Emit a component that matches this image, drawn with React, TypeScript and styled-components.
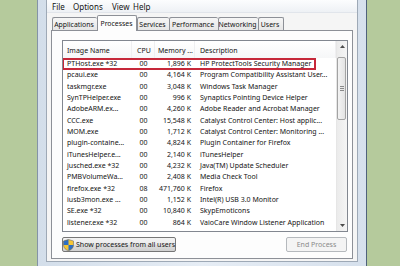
import React from 'react';
import styled, { createGlobalStyle } from 'styled-components';

const GlobalStyle = createGlobalStyle`
  html, body {
    margin: 0;
    padding: 0;
  }
  body {
    width: 400px;
    height: 266px;
    overflow: hidden;
    background: #b5ca9c;
    font-family: "Noto Sans", "Open Sans", sans-serif;
    color: #141414;
  }
`;

const Stage = styled.div`
  display: flex;
  width: 400px;
  height: 266px;
  padding-left: 37px;
  box-sizing: border-box;
  background: #b5ca9c;
`;

const Window = styled.div`
  display: flex;
  flex-direction: column;
  width: 330px;
  height: 266px;
  box-sizing: border-box;
  padding: 0 8px 4px 8px;
  background: linear-gradient(to right, #d3deea, #e6edf5 50%, #d6e0ec);
  border-left: 1px solid #8493a6;
  border-right: 1px solid #4f627a;
`;

const Client = styled.div`
  flex: 1;
  display: flex;
  flex-direction: column;
  background: #f5f5f5;
  border: 1px solid #9ea9b6;
  border-top: none;
  overflow: hidden;
`;

const MenuBar = styled.div`
  display: flex;
  align-items: center;
  height: 13px;
  padding-left: 5px;
  background: linear-gradient(#fcfdfe, #eef1f5);
  border-bottom: 1px solid #e1e5eb;
  font-size: 8px;
  box-sizing: border-box;
`;

const MenuItem = styled.span<{ $w: number }>`
  flex: 0 0 ${p => p.$w}px;
  white-space: nowrap;
`;

const TabStrip = styled.div`
  display: flex;
  align-items: flex-end;
  height: 17px;
  padding-left: 4.5px;
  position: relative;
  z-index: 1;
`;

const Tab = styled.div<{ $w: number; $active?: boolean }>`
  display: flex;
  align-items: center;
  justify-content: center;
  flex: 0 0 ${p => p.$w}px;
  height: ${p => (p.$active ? 16 : 13)}px;
  margin-bottom: ${p => (p.$active ? -1 : 0)}px;
  box-sizing: border-box;
  border: 1px solid #8d9097;
  border-bottom: none;
  border-left-width: ${p => (p.$active ? 1 : 0)}px;
  border-right-width: ${p => (p.$active ? 1 : 0)}px;
  border-radius: 2px 2px 0 0;
  background: ${p =>
    p.$active ? '#fdfdfd' : 'linear-gradient(#f6f6f6, #e6e6e6)'};
  font-size: 6.9px;
  white-space: nowrap;
  box-shadow: ${p => (p.$active ? 'none' : 'inset 1px 0 0 #8d9097')};

  &:last-child {
    border-right-width: 1px;
  }
`;

const TabPanel = styled.div`
  flex: 1;
  display: flex;
  flex-direction: column;
  margin: 0 4px 2px 4px;
  padding: 9px 4px 0 10px;
  border: 1px solid #8d9097;
  background: #fdfdfd;
`;

const ListBox = styled.div`
  display: flex;
  height: 192px;
  box-sizing: border-box;
  border: 1px solid #828790;
  background: #fff;
  overflow: hidden;
`;

const ListMain = styled.div`
  flex: 1;
  display: flex;
  flex-direction: column;
  min-width: 0;
`;

const columns = '69px 23px 40px 1fr';

const HeaderRow = styled.div`
  display: grid;
  grid-template-columns: ${columns};
  height: 17px;
  flex-shrink: 0;
  align-items: center;
  background: linear-gradient(#ffffff, #f6f7f8);
  font-size: 7px;
`;

const HeadCell = styled.div<{ $pad: number }>`
  padding-left: ${p => p.$pad}px;
  height: 100%;
  display: flex;
  align-items: center;
  padding-top: 1px;
  box-sizing: border-box;
  border-right: 1px solid #efeff1;
  white-space: nowrap;
  overflow: hidden;
`;

const Row = styled.div`
  position: relative;
  display: grid;
  grid-template-columns: ${columns};
  height: 11.33px;
  flex-shrink: 0;
  align-items: center;
  font-size: 7px;
  line-height: 11px;
`;

const Cell = styled.div<{ $align?: 'left' | 'center' | 'right' }>`
  text-align: ${p => p.$align || 'left'};
  padding: ${p =>
    p.$align === 'right' ? '0 4px 0 0' : p.$align === 'center' ? '0' : '0 0 0 4px'};
  white-space: nowrap;
  overflow: hidden;
`;

const DescCell = styled(Cell)`
  padding-left: 5px;
`;

const Highlight = styled.div`
  position: absolute;
  left: -1px;
  top: -0.5px;
  width: 254px;
  height: 12px;
  box-sizing: border-box;
  border: 2px solid #c6283a;
`;

const ScrollBar = styled.div`
  display: flex;
  flex-direction: column;
  width: 10px;
  flex-shrink: 0;
  background: linear-gradient(to right, #ebebeb, #f5f5f5);
  border-left: 1px solid #e6e6e6;
`;

const ArrowButton = styled.div`
  display: flex;
  align-items: center;
  justify-content: center;
  height: 11px;
  flex-shrink: 0;
`;

const Track = styled.div`
  flex: 1;
  padding-top: 5px;
`;

const Thumb = styled.div`
  display: flex;
  flex-direction: column;
  align-items: center;
  justify-content: center;
  gap: 1px;
  height: 63px;
  margin: 0 1px 0 0;
  box-sizing: border-box;
  border: 1px solid #a3a3a3;
  border-radius: 2px;
  background: linear-gradient(to right, #f4f4f4, #e3e3e3);
`;

const Grip = styled.span`
  width: 4px;
  height: 1px;
  background: #8a8a8a;
`;

const ButtonRow = styled.div`
  display: flex;
  justify-content: space-between;
  margin-top: 5px;
  padding-right: 1px;
`;

const Button = styled.div<{ $w: number; $disabled?: boolean }>`
  display: flex;
  align-items: center;
  justify-content: center;
  gap: 2px;
  width: ${p => p.$w}px;
  height: 15px;
  box-sizing: border-box;
  border: 1px solid ${p => (p.$disabled ? '#b5b9bd' : '#767676')};
  border-radius: 2px;
  background: ${p =>
    p.$disabled
      ? '#f4f4f4'
      : 'linear-gradient(#f3f3f3 0%, #ebebeb 48%, #dddddd 52%, #d0d0d0 100%)'};
  color: ${p => (p.$disabled ? '#8a8a8a' : '#141414')};
  font-size: 7px;
  white-space: nowrap;
`;

const Shield = () => (
  <svg width="11" height="12" viewBox="0 0 11 12">
    <path d="M5.5 0.5 L10.5 2 L10.5 6 C10.5 9 8 11 5.5 11.7 C3 11 0.5 9 0.5 6 L0.5 2 Z" fill="#f6c634" />
    <path d="M5.5 0.5 L0.5 2 L0.5 6 L5.5 6 Z" fill="#2c6fc4" />
    <path d="M5.5 6 L10.5 6 C10.5 9 8 11 5.5 11.7 Z" fill="#2c6fc4" />
    <path d="M5.5 0.5 L10.5 2 L10.5 6 C10.5 9 8 11 5.5 11.7 C3 11 0.5 9 0.5 6 L0.5 2 Z" fill="none" stroke="#6d6d6d" strokeWidth="0.6" />
  </svg>
);

const Arrow = ({ down }: { down?: boolean }) => (
  <svg width="5" height="3" viewBox="0 0 5 3">
    <path d={down ? 'M0 0 H5 L2.5 3 Z' : 'M0 3 H5 L2.5 0 Z'} fill="#4d4d4d" />
  </svg>
);

const processes: [string, string, string, string][] = [
  ['PTHost.exe *32', '00', '1,896 K', 'HP ProtectTools Security Manager'],
  ['pcaui.exe', '00', '4,164 K', 'Program Compatibility Assistant User...'],
  ['taskmgr.exe', '00', '3,048 K', 'Windows Task Manager'],
  ['SynTPHelper.exe', '00', '996 K', 'Synaptics Pointing Device Helper'],
  ['AdobeARM.ex...', '00', '4,260 K', 'Adobe Reader and Acrobat Manager'],
  ['CCC.exe', '00', '15,548 K', 'Catalyst Control Center: Host applic...'],
  ['MOM.exe', '00', '1,712 K', 'Catalyst Control Center: Monitoring ...'],
  ['plugin-containe...', '00', '4,824 K', 'Plugin Container for Firefox'],
  ['iTunesHelper.e...', '00', '2,140 K', 'iTunesHelper'],
  ['jusched.exe *32', '00', '4,232 K', 'Java(TM) Update Scheduler'],
  ['PMBVolumeWa...', '00', '2,408 K', 'Media Check Tool'],
  ['firefox.exe *32', '08', '471,760 K', 'Firefox'],
  ['iusb3mon.exe ...', '00', '1,152 K', 'Intel(R) USB 3.0 Monitor'],
  ['SE.exe *32', '00', '10,840 K', 'SkypEmoticons'],
  ['listener.exe *32', '00', '864 K', 'VaioCare Window Listener Application'],
  ['VCSystemTray...', '01', '13,132 K', 'VCSystemTray'],
];

const tabs: [string, number][] = [
  ['Applications', 45],
  ['Processes', 40],
  ['Services', 32],
  ['Performance', 49],
  ['Networking', 40],
  ['Users', 26],
];

export default function App() {
  return (
    <>
      <GlobalStyle />
      <Stage>
        <Window>
          <Client>
            <MenuBar>
              <MenuItem $w={21}>File</MenuItem>
              <MenuItem $w={39}>Options</MenuItem>
              <MenuItem $w={21}>View</MenuItem>
              <MenuItem $w={20}>Help</MenuItem>
            </MenuBar>
            <TabStrip>
              {tabs.map(([label, w]) => (
                <Tab key={label} $w={w} $active={label === 'Processes'}>
                  {label}
                </Tab>
              ))}
            </TabStrip>
            <TabPanel>
              <ListBox>
                <ListMain>
                  <HeaderRow>
                    <HeadCell $pad={4}>Image Name</HeadCell>
                    <HeadCell $pad={5}>CPU</HeadCell>
                    <HeadCell $pad={3}>Memory ...</HeadCell>
                    <HeadCell $pad={5}>Description</HeadCell>
                  </HeaderRow>
                  {processes.map(([name, cpu, mem, desc], i) => (
                    <Row key={name}>
                      <Cell>{name}</Cell>
                      <Cell $align="center">{cpu}</Cell>
                      <Cell $align="right">{mem}</Cell>
                      <DescCell>{desc}</DescCell>
                      {i === 0 && <Highlight />}
                    </Row>
                  ))}
                </ListMain>
                <ScrollBar>
                  <ArrowButton>
                    <Arrow />
                  </ArrowButton>
                  <Track>
                    <Thumb>
                      <Grip />
                      <Grip />
                      <Grip />
                    </Thumb>
                  </Track>
                  <ArrowButton>
                    <Arrow down />
                  </ArrowButton>
                </ScrollBar>
              </ListBox>
              <ButtonRow>
                <Button $w={114}>
                  <Shield />
                  Show processes from all users
                </Button>
                <Button $w={61} $disabled>
                  End Process
                </Button>
              </ButtonRow>
            </TabPanel>
          </Client>
        </Window>
      </Stage>
    </>
  );
}
